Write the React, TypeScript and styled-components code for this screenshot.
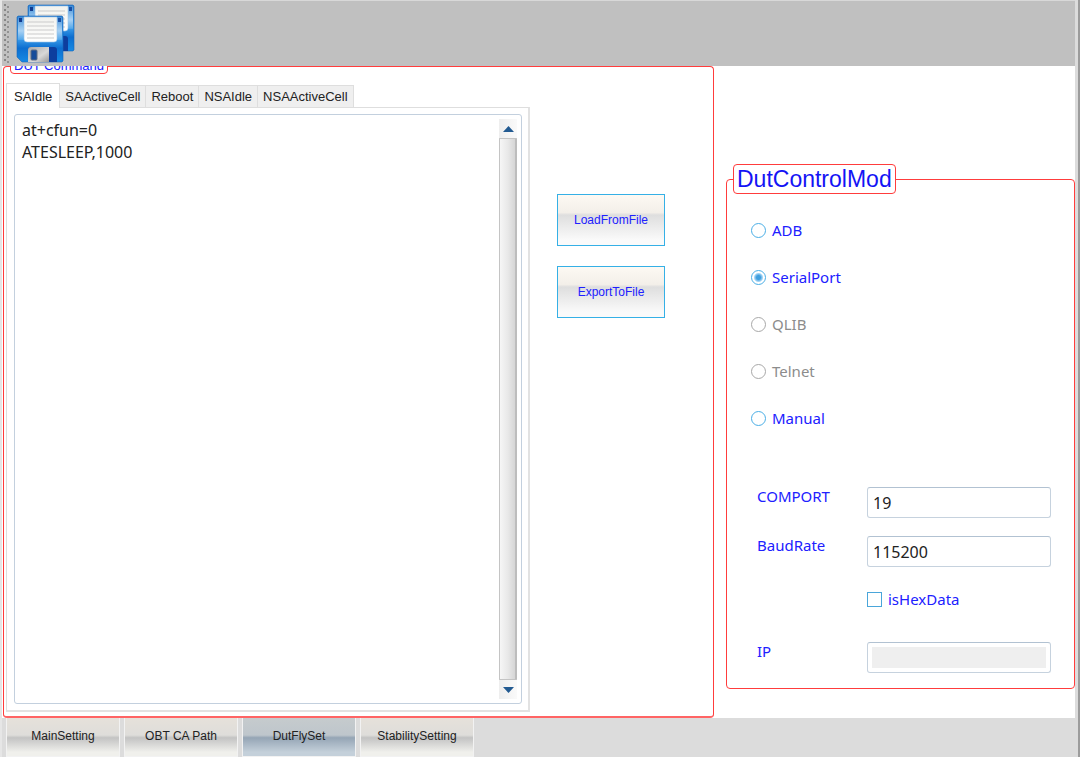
import React, { useState } from "react";
import styled, { createGlobalStyle } from "styled-components";

const ui = `"Liberation Sans", Arial, sans-serif`;
const humanist = `"Noto Sans", "Open Sans", sans-serif`;
const red = "#ff3c3c";
const blue = "#2020ff";

const GlobalStyle = createGlobalStyle`
  * { box-sizing: border-box; }
  body { margin: 0; background: #fff; font-family: ${ui}; font-size: 13px; color: #222; }
  button, input, textarea { font: inherit; }
`;

const Window = styled.div`
  display: flex;
  flex-direction: column;
  min-height: 100vh;
  background: #fff;
  border-right: 2px solid #9c9c9c;
`;

const Frame = styled.div`
  flex: 1;
  display: flex;
  flex-direction: column;
  border-left: 2px solid #e6e6e6;
  border-right: 3px solid #dcdcdc;
`;

const Toolbar = styled.header`
  position: relative;
  z-index: 1;
  display: flex;
  align-items: center;
  gap: 6px;
  height: 66px;
  padding-left: 2px;
  background: #c0c0c0;
  border-top: 1px solid #d8d8d8;
`;

const Grip = styled.div`
  width: 6px;
  height: 60px;
  background-image: radial-gradient(circle at 1px 1px, #858585 1px, transparent 1px),
    radial-gradient(circle at 4px 3px, #929292 1px, #e4e4e4 2px, transparent 2px);
  background-size: 6px 5px;
`;

const ToolButton = styled.button`
  display: flex;
  padding: 0;
  border: 0;
  background: none;
`;

const Main = styled.main`
  flex: 1;
  display: grid;
  grid-template-columns: minmax(0, 711fr) minmax(0, 349fr);
  column-gap: 12px;
  padding-left: 1px;
`;

const Group = styled.fieldset`
  min-width: 0;
  margin: 0;
  padding: 0;
  border: 1px solid ${red};
  border-radius: 4px;
`;

const CommandGroup = styled(Group)`
  margin-top: -8px;
  border-bottom: 2px solid #ff6464;
`;

const ControlGroup = styled(Group)`
  align-self: start;
  margin-top: 98px;
  padding-bottom: 15px;
`;

const Legend = styled.legend<{ $large?: boolean }>`
  margin-left: 6px;
  padding: 0 3px;
  border: 1px solid ${red};
  border-radius: 4px;
  background: #fff;
  color: ${(p) => (p.$large ? "#1414f5" : blue)};
  font-size: ${(p) => (p.$large ? 23 : 13)}px;
  line-height: ${(p) => (p.$large ? 28 : 14)}px;
`;

const CommandBody = styled.div`
  display: grid;
  grid-template-columns: minmax(0, 524fr) minmax(0, 183fr);
  height: 100%;
  padding: 9px 0 4px 2px;
`;

const Tabs = styled.div`
  display: flex;
  flex-direction: column;
`;

const TabList = styled.div`
  display: flex;
  align-items: flex-end;
  height: 24px;
`;

const Tab = styled.button<{ $active: boolean }>`
  position: relative;
  height: ${(p) => (p.$active ? 25 : 22)}px;
  margin-bottom: ${(p) => (p.$active ? -1 : 0)}px;
  padding: 0 ${(p) => (p.$active ? 7 : 5)}px;
  border: 1px solid #dedede;
  border-left-width: ${(p) => (p.$active ? 1 : 0)}px;
  border-bottom: 0;
  background: ${(p) => (p.$active ? "#fff" : "#efefef")};
  color: #222;
  font-size: 13px;
`;

const TabPanel = styled.div`
  flex: 1;
  display: flex;
  padding: 6px 6px 6px 7px;
  border: 1px solid #dedede;
  border-right: 2px solid #e2e2e2;
  border-bottom: 2px solid #e2e2e2;
`;

const Editor = styled.div`
  flex: 1;
  display: flex;
  padding: 4px;
  border: 1px solid #c3d0de;
  border-radius: 3px;
`;

const CommandText = styled.textarea`
  flex: 1;
  min-width: 0;
  padding: 0 3px;
  border: 0;
  outline: 0;
  resize: none;
  overflow: hidden;
  background: transparent;
  color: #222;
  font-family: ${humanist};
  font-size: 16px;
  line-height: 22px;
`;

const ScrollBar = styled.div`
  display: flex;
  flex-direction: column;
  width: 18px;
`;

const ScrollArrow = styled.button`
  display: flex;
  align-items: center;
  justify-content: center;
  height: 19px;
  padding: 0;
  border: 0;
  background: linear-gradient(90deg, #eee, #fafafa);
`;

const ScrollThumb = styled.div`
  flex: 1;
  border: 1px solid #c4c4c4;
  border-right: 2px solid #bdbdbd;
  border-radius: 1px;
  background: linear-gradient(90deg, #f6f6f6, #e9e9e9 50%, #d6d6d6);
`;

const Actions = styled.div`
  display: flex;
  flex-direction: column;
  align-items: flex-start;
  gap: 20px;
  padding: 111px 0 0 27px;
`;

const ActionButton = styled.button`
  width: 108px;
  height: 52px;
  padding: 0;
  border: 1px solid #35b0e6;
  background: linear-gradient(#fdf9f3, #f3efe9 35%, #dedede 40%, #fafafa 90%);
  color: ${blue};
  font-size: 12px;
`;

const Options = styled.div`
  display: flex;
  flex-direction: column;
  gap: 27px;
  padding: 26px 0 0 24px;
`;

const Choice = styled.label<{ $disabled?: boolean }>`
  display: flex;
  align-items: center;
  gap: 6px;
  height: 20px;
  color: ${(p) => (p.$disabled ? "#8c8c8c" : blue)};
  font-family: ${humanist};
  font-size: 15px;
`;

const Radio = styled.input`
  appearance: none;
  width: 15px;
  height: 15px;
  margin: 0;
  border: 1px solid #4aaee6;
  border-radius: 50%;
  background: #fff;
  &:checked {
    background: radial-gradient(circle, #3f9fdf 2px, #a4d4f4 4px, #fff 5px);
  }
  &:disabled {
    border-color: #a8a8a8;
  }
`;

const CheckBox = styled.input`
  appearance: none;
  width: 15px;
  height: 15px;
  margin: 0;
  border: 1px solid #4aa6da;
  background: #fff;
  &:checked {
    background: #4aa6da;
  }
`;

const Form = styled.div`
  display: grid;
  grid-template-columns: 110px 1fr;
  row-gap: 18px;
  padding: 59px 23px 0 30px;
`;

const FieldLabel = styled.label`
  color: ${blue};
  font-family: ${humanist};
  font-size: 15px;
  line-height: 18px;
`;

const Field = styled.input`
  width: 100%;
  min-width: 0;
  height: 31px;
  padding: 1px 5px 0;
  border: 1px solid #c6d2de;
  border-top-color: #b2c2d2;
  border-radius: 3px;
  outline: 0;
  background: #fff;
  color: #222;
  font-family: ${humanist};
  font-size: 16px;
  &:disabled {
    padding: 4px;
    background: #efefef content-box;
  }
`;

const HexRow = styled.div`
  grid-column: 2;
  padding: 4px 0 15px;
`;

const PageTabs = styled.nav`
  display: flex;
  gap: 4px;
  height: 39px;
  padding-left: 4px;
  background: #dcdcdc;
`;

const PageTab = styled.button<{ $active: boolean }>`
  width: 114px;
  padding: 0 0 2px;
  border: 1px solid #f2f2f2;
  border-top: 0;
  background: ${(p) =>
    p.$active
      ? "linear-gradient(#c6cbcd, #bec6cc 45%, #95a5b5 52%, #c4d0da 90%)"
      : "linear-gradient(#e6e1da, #deddda 45%, #c3c3c3 52%, #f0f0ec 90%)"};
  color: #222;
  font-size: 12px;
`;

function SaveAllIcon() {
  const disk = (
    <>
      <path d="M1 0H45L46 1V45L45 46H5L0 41V1Z" fill="url(#disk)" stroke="#1767b8" strokeWidth=".6" />
      <path d="M1 1H7V24H1Z" fill="url(#shine)" />
      <path d="M40 1H45V24H40Z" fill="url(#shine)" />
      <path d="M7 1H40V23Q40 26 37 26H10Q7 26 7 23Z" fill="url(#paper)" stroke="#9cc3e8" strokeWidth=".6" />
      <path d="M10 6H37M10 10H37M10 14H37M10 18H37M10 22H37" stroke="#cbcbcb" strokeWidth="1" />
      <rect x="2" y="2" width="3" height="4" fill="#123b8e" />
      <rect x="41" y="2" width="3" height="4" fill="#1a4fa4" />
      <path d="M11 46V34Q11 31 14 31H37Q40 31 40 34V46Z" fill="#0d3e9e" />
      <path d="M11 46V34Q11 31 14 31H32V46Z" fill="url(#shutter)" />
      <rect x="14" y="34" width="6" height="10" rx="1" fill="#164c9a" stroke="#5d6d83" />
    </>
  );
  return (
    <svg width="60" height="60" viewBox="0 0 60 60" aria-hidden="true">
      <defs>
        <linearGradient id="disk" x1="0" y1="0" x2="0" y2="1">
          <stop offset="0" stopColor="#2a7fd2" />
          <stop offset=".5" stopColor="#3a9be8" />
          <stop offset=".7" stopColor="#0c6ed0" />
          <stop offset="1" stopColor="#168ae4" />
        </linearGradient>
        <linearGradient id="shine" x1="0" y1="0" x2="0" y2="1">
          <stop offset="0" stopColor="#fff" stopOpacity=".1" />
          <stop offset=".6" stopColor="#e6f4ff" stopOpacity=".65" />
          <stop offset="1" stopColor="#fff" stopOpacity=".1" />
        </linearGradient>
        <linearGradient id="paper" x1="0" y1="0" x2="0" y2="1">
          <stop offset="0" stopColor="#f2f2ee" />
          <stop offset="1" stopColor="#fff" />
        </linearGradient>
        <linearGradient id="shutter" x1="0" y1="0" x2="1" y2="1">
          <stop offset="0" stopColor="#a8a8a8" />
          <stop offset=".6" stopColor="#d8d8d8" />
          <stop offset="1" stopColor="#999" />
        </linearGradient>
      </defs>
      <g transform="translate(12 1)">{disk}</g>
      <g transform="translate(1 12)">{disk}</g>
    </svg>
  );
}

const commandTabs = ["SAIdle", "SAActiveCell", "Reboot", "NSAIdle", "NSAActiveCell"];
const pages = ["MainSetting", "OBT CA Path", "DutFlySet", "StabilitySetting"];
const modes = [
  { name: "ADB" },
  { name: "SerialPort" },
  { name: "QLIB", disabled: true },
  { name: "Telnet", disabled: true },
  { name: "Manual" },
];

export default function App() {
  const [tab, setTab] = useState("SAIdle");
  const [page, setPage] = useState("DutFlySet");
  const [mode, setMode] = useState("SerialPort");

  return (
    <Window>
      <GlobalStyle />
      <Frame>
        <Toolbar>
          <Grip />
          <ToolButton aria-label="Save all">
            <SaveAllIcon />
          </ToolButton>
        </Toolbar>
        <Main>
          <CommandGroup>
            <Legend>DUT Command</Legend>
            <CommandBody>
              <Tabs>
                <TabList role="tablist">
                  {commandTabs.map((name) => (
                    <Tab key={name} role="tab" aria-selected={tab === name} $active={tab === name} onClick={() => setTab(name)}>
                      {name}
                    </Tab>
                  ))}
                </TabList>
                <TabPanel role="tabpanel">
                  <Editor>
                    <CommandText aria-label="Commands" spellCheck={false} defaultValue={"at+cfun=0\nATESLEEP,1000"} />
                    <ScrollBar>
                      <ScrollArrow aria-label="Scroll up">
                        <svg width="11" height="6"><path d="M0 6L5.5 0L11 6Z" fill="#225a91" /></svg>
                      </ScrollArrow>
                      <ScrollThumb />
                      <ScrollArrow aria-label="Scroll down">
                        <svg width="11" height="6"><path d="M0 0L5.5 6L11 0Z" fill="#225a91" /></svg>
                      </ScrollArrow>
                    </ScrollBar>
                  </Editor>
                </TabPanel>
              </Tabs>
              <Actions>
                <ActionButton>LoadFromFile</ActionButton>
                <ActionButton>ExportToFile</ActionButton>
              </Actions>
            </CommandBody>
          </CommandGroup>
          <ControlGroup>
            <Legend $large>DutControlMod</Legend>
            <Options>
              {modes.map((m) => (
                <Choice key={m.name} $disabled={m.disabled}>
                  <Radio type="radio" name="mode" disabled={m.disabled} checked={mode === m.name} onChange={() => setMode(m.name)} />
                  {m.name}
                </Choice>
              ))}
            </Options>
            <Form>
              <FieldLabel htmlFor="comport">COMPORT</FieldLabel>
              <Field id="comport" defaultValue="19" />
              <FieldLabel htmlFor="baud">BaudRate</FieldLabel>
              <Field id="baud" defaultValue="115200" />
              <HexRow>
                <Choice>
                  <CheckBox type="checkbox" />
                  isHexData
                </Choice>
              </HexRow>
              <FieldLabel htmlFor="ip">IP</FieldLabel>
              <Field id="ip" disabled />
            </Form>
          </ControlGroup>
        </Main>
        <PageTabs>
          {pages.map((name) => (
            <PageTab key={name} $active={page === name} onClick={() => setPage(name)}>
              {name}
            </PageTab>
          ))}
        </PageTabs>
      </Frame>
    </Window>
  );
}
